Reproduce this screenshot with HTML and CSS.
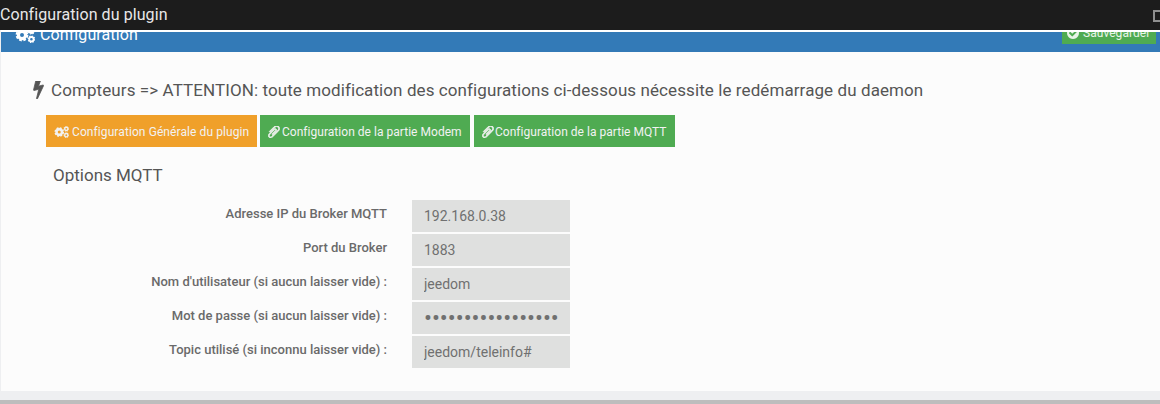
FILE: index.html
```html
<!DOCTYPE html>
<html lang="fr">
<head>
<meta charset="utf-8">
<title>Configuration du plugin</title>
<link rel="stylesheet" href="styles.css">
</head>
<body>
<svg class="defs" width="0" height="0" aria-hidden="true">
  <symbol id="i-cogs" viewBox="0 0 20 16">
    <circle cx="7" cy="8" r="5" fill="none" stroke="currentColor" stroke-width="2.8" stroke-dasharray="2.4 1.53"/>
    <circle cx="7" cy="8" r="3.6" fill="none" stroke="currentColor" stroke-width="3.2"/>
    <circle cx="16.4" cy="3.8" r="2.2" fill="none" stroke="currentColor" stroke-width="1.8"/>
    <circle cx="16.4" cy="3.8" r="3.2" fill="none" stroke="currentColor" stroke-width="1.2" stroke-dasharray="1.3 1.2"/>
    <circle cx="16.4" cy="12.2" r="2.2" fill="none" stroke="currentColor" stroke-width="1.8"/>
    <circle cx="16.4" cy="12.2" r="3.2" fill="none" stroke="currentColor" stroke-width="1.2" stroke-dasharray="1.3 1.2"/>
  </symbol>
  <symbol id="i-clip" viewBox="190 190 1420 1480">
    <path fill="currentColor" stroke="currentColor" stroke-width="90" transform="translate(1792 0) scale(-1 1)" d="M1596 1385q0 117-79 196t-196 79q-135 0-235-100l-777-776q-113-115-113-271 0-159 110-270t269-111q158 0 273 113l605 606q10 10 10 22 0 16-30.5 46.5t-46.5 30.5q-13 0-23-10l-606-607q-79-77-181-77-106 0-179 75t-73 181q0 105 76 181l776 777q63 63 145 63 64 0 106-42t42-106q0-82-63-145l-581-581q-26-24-60-24-29 0-48 19t-19 48q0 32 25 59l410 410q10 10 10 22 0 16-31 47t-47 31q-12 0-22-10l-410-410q-63-61-63-149 0-82 57-139t139-57q88 0 149 63l581 581q100 98 100 235z"/>
  </symbol>
</svg>

<header class="titlebar">
  <span class="titlebar-text">Configuration du plugin</span>
  <span class="window-btn"></span>
</header>

<main class="panel">
  <div class="panel-heading">
    <h3 class="panel-title">
      <svg class="icon-cogs-lg"><use href="#i-cogs"/></svg>
      <span>Configuration</span>
    </h3>
    <button class="btn-save" type="button">
      <svg class="icon-check" viewBox="128 128 1536 1536"><path fill="currentColor" d="M1412 734q0-28-18-46l-91-90q-19-19-45-19t-45 19l-408 407-226-226q-19-19-45-19t-45 19l-91 90q-18 18-18 46 0 27 18 45l362 362q19 19 45 19 27 0 46-19l543-543q18-18 18-45zm252 162q0 209-103 385.5t-279.5 279.5-385.5 103-385.5-103-279.5-279.5-103-385.5 103-385.5 279.5-279.5 385.5-103 385.5 103 279.5 279.5 103 385.5z"/></svg>
      Sauvegarder
    </button>
  </div>

  <div class="panel-body">
    <h4 class="notice">
      <svg class="icon-bolt" viewBox="400 240 920 1600"><path fill="currentColor" stroke="currentColor" stroke-width="70" d="M1303 611q18 20 7 44l-540 1157q-13 25-42 25-4 0-14-2-17-5-25.5-19t-4.5-30l197-808-406 101q-4 1-12 1-18 0-31-11-18-15-13-39l201-825q4-14 16-23t28-9h328q19 0 32 12.5t13 29.5q0 8-5 18l-171 463 396-98q8-2 12-2 19 0 34 15z"/></svg>
      <span>Compteurs =&gt; ATTENTION: toute modification des configurations ci-dessous nécessite le redémarrage du daemon</span>
    </h4>

    <nav class="tabs">
      <a class="tab tab-orange"><svg class="icon-cogs"><use href="#i-cogs"/></svg>Configuration Générale du plugin</a>
      <a class="tab tab-green tab-modem"><svg class="icon-clip"><use href="#i-clip"/></svg>Configuration de la partie Modem</a>
      <a class="tab tab-green tab-mqtt"><svg class="icon-clip"><use href="#i-clip"/></svg>Configuration de la partie MQTT</a>
    </nav>

    <h5 class="section-title">Options MQTT</h5>

    <form class="form">
      <label class="form-label">Adresse IP du Broker MQTT</label>
      <input class="form-input" type="text" value="192.168.0.38">
      <label class="form-label">Port du Broker</label>
      <input class="form-input" type="text" value="1883">
      <label class="form-label">Nom d'utilisateur (si aucun laisser vide) :</label>
      <input class="form-input" type="text" value="jeedom">
      <label class="form-label">Mot de passe (si aucun laisser vide) :</label>
      <input class="form-input form-password" type="password" value="abcdefghijklmnopq">
      <label class="form-label">Topic utilisé (si inconnu laisser vide) :</label>
      <input class="form-input" type="text" value="jeedom/teleinfo#">
    </form>
  </div>
</main>
<div class="page-bottom"></div>
</body>
</html>
```

FILE: styles.css
```css
* { box-sizing: border-box; }
html, body { margin: 0; padding: 0; }
body {
  width: 1160px;
  height: 404px;
  overflow: hidden;
  background: #eeeff1;
  font-family: Roboto, "Liberation Sans", sans-serif;
  display: flex;
  flex-direction: column;
}
.defs { display: block; width: 0; height: 0; }

.titlebar {
  height: 30px;
  flex: none;
  background: #1c1c1c;
  color: #e8e8e8;
  display: flex;
  align-items: center;
  justify-content: space-between;
  font-size: 16px;
  line-height: 30px;
  letter-spacing: 0.08px;
  overflow: hidden;
}
.window-btn {
  width: 12px;
  height: 12px;
  margin-right: -5px;
  margin-top: 1px;
  border: 2px solid #8f8f8f;
  flex: none;
}

.panel {
  flex: none;
  height: 361px;
  margin-left: 1px;
  border-top: 2px solid #fff;
  background: #fcfcfc;
  display: flex;
  flex-direction: column;
}
.panel-heading {
  height: 20px;
  flex: none;
  background: #337ab7;
  color: #fff;
  position: relative;
  overflow: hidden;
  display: flex;
  justify-content: space-between;
  padding: 0 4px 0 14px;
}
.panel-title {
  margin: -7px 0 0;
  height: 20px;
  font-size: 16px;
  font-weight: 400;
  line-height: 20px;
  letter-spacing: 0.1px;
  display: flex;
  align-items: center;
  gap: 5px;
}
.icon-cogs-lg { width: 20px; height: 16px; color: #fff; }
.btn-save {
  width: 94px;
  height: 22px;
  margin: -10px 0 0;
  border: 0;
  padding: 0 5px;
  background: #4fab52;
  color: #e8f4e8;
  font: 400 12px/22px Roboto, sans-serif;
  letter-spacing: 0.05px;
  display: flex;
  align-items: center;
  gap: 4px;
}
.icon-check { width: 12px; height: 12px; flex: none; }

.panel-body {
  flex: 1;
  padding: 0 0 0 31px;
}
.notice {
  margin: 26px 0 0;
  height: 24px;
  display: flex;
  align-items: center;
  gap: 7px;
  font-size: 17px;
  font-weight: 400;
  line-height: 24px;
  letter-spacing: 0.09px;
  color: #555;
  white-space: nowrap;
}
.icon-bolt { width: 11px; height: 18px; margin-top: -1px; flex: none; margin-left: 1px; }

.tabs {
  display: flex;
  margin: 13px 0 0 14px;
  height: 32px;
}
.tab {
  height: 32px;
  display: flex;
  align-items: center;
  padding: 1px 8px 0;
  font-size: 12px;
  letter-spacing: 0.09px;
  color: #f2f2f2;
  white-space: nowrap;
  gap: 3px;
}
.tab-orange { background: #f0a02a; width: 211px; }
.tab-green { background: #4fab52; letter-spacing: 0.03px; }
.tab-modem { width: 210px; margin-left: 3px; gap: 2px; }
.tab-mqtt { width: 201px; margin-left: 4px; gap: 1px; }
.icon-cogs { width: 15px; height: 12px; flex: none; }
.icon-clip { width: 12px; height: 12px; flex: none; }

.section-title {
  margin: 18px 0 0 21px;
  height: 20px;
  font-size: 17px;
  font-weight: 400;
  line-height: 20px;
  color: #555;
}

.form {
  display: grid;
  grid-template-columns: 355px 158px;
  column-gap: 25px;
  row-gap: 2px;
  margin-top: 15px;
  justify-content: start;
}
.form-label {
  text-align: right;
  font-size: 13px;
  font-weight: 500;
  line-height: 15px;
  color: #6a6a6a;
  padding-top: 6px;
}
.form-input {
  width: 158px;
  height: 32px;
  border: 0;
  padding: 0 12px;
  background: #dfe0df;
  color: #707070;
  font: 400 14px Roboto, sans-serif;
  outline: 0;
}
.form-password { font-size: 23.5px; padding-right: 0; }

.page-bottom {
  margin-top: 9px;
  height: 4px;
  flex: none;
  background: #bdbdbd;
}
```
